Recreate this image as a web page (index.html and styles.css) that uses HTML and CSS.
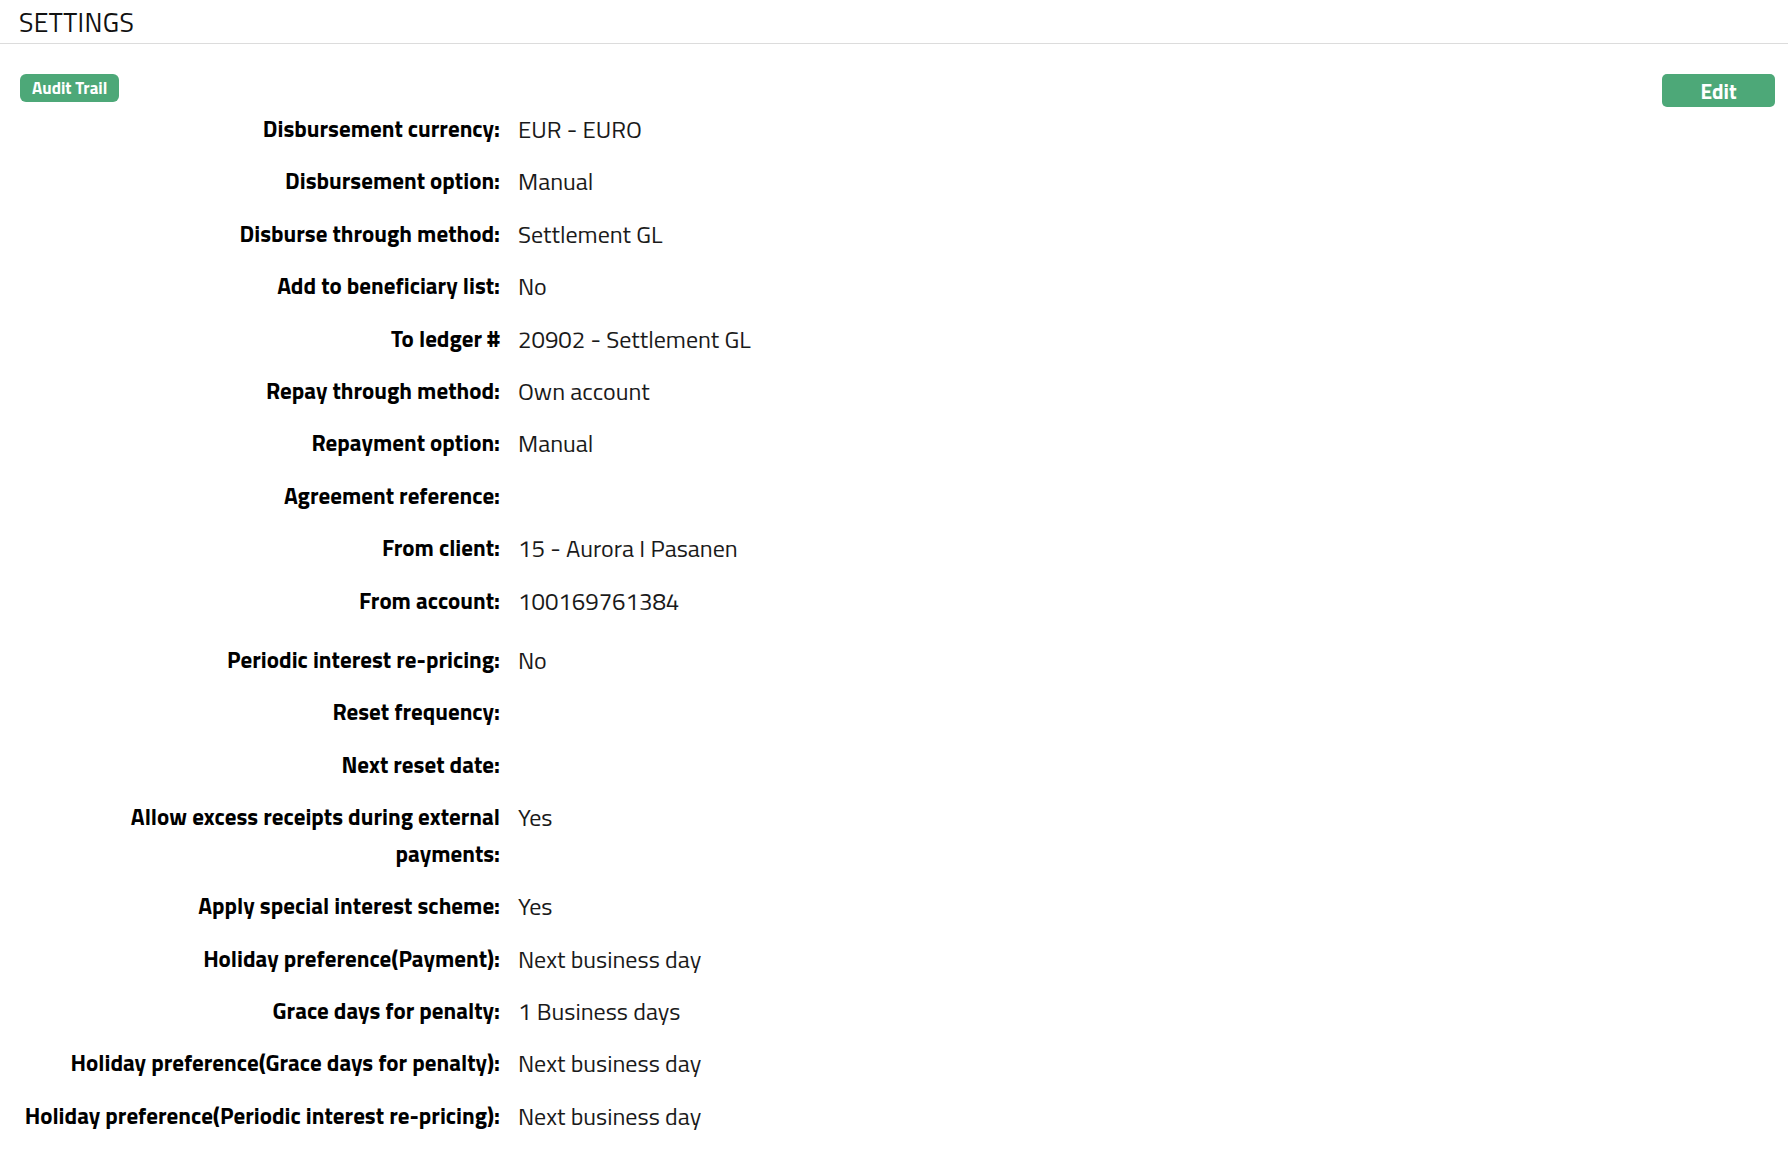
FILE: index.html
```html
<!DOCTYPE html>
<html lang="en">
<head>
  <meta charset="UTF-8">
  <meta name="viewport" content="width=device-width, initial-scale=1.0">
  <title>Settings</title>
  <link rel="stylesheet" href="styles.css">
</head>
<body>
  <div class="page-header">
    <h1 class="page-title">SETTINGS</h1>
  </div>

  <div class="panel">
    <div class="toolbar">
      <button class="btn btn-small">Audit Trail</button>
      <button class="btn btn-edit">Edit</button>
    </div>

    <dl class="details">
      <dt>Disbursement currency:</dt>
      <dd>EUR - EURO</dd>

      <dt>Disbursement option:</dt>
      <dd>Manual</dd>

      <dt>Disburse through method:</dt>
      <dd>Settlement GL</dd>

      <dt>Add to beneficiary list:</dt>
      <dd>No</dd>

      <dt>To ledger #</dt>
      <dd>20902 - Settlement GL</dd>

      <dt>Repay through method:</dt>
      <dd>Own account</dd>

      <dt>Repayment option:</dt>
      <dd>Manual</dd>

      <dt>Agreement reference:</dt>
      <dd></dd>

      <dt>From client:</dt>
      <dd>15 - Aurora I Pasanen</dd>

      <dt>From account:</dt>
      <dd>100169761384</dd>
    </dl>

    <dl class="details details-next">
      <dt>Periodic interest re-pricing:</dt>
      <dd>No</dd>

      <dt>Reset frequency:</dt>
      <dd></dd>

      <dt>Next reset date:</dt>
      <dd></dd>

      <dt>Allow excess receipts during external payments:</dt>
      <dd>Yes</dd>

      <dt>Apply special interest scheme:</dt>
      <dd>Yes</dd>

      <dt>Holiday preference(Payment):</dt>
      <dd>Next business day</dd>

      <dt>Grace days for penalty:</dt>
      <dd>1 Business days</dd>

      <dt>Holiday preference(Grace days for penalty):</dt>
      <dd>Next business day</dd>

      <dt>Holiday preference(Periodic interest re-pricing):</dt>
      <dd>Next business day</dd>
    </dl>
  </div>
</body>
</html>
```
FILE: styles.css
```css
body {
  margin: 0;
  font-family: "Titillium Web", "Roboto Condensed", sans-serif;
  color: #111;
  background: #fff;
}

.page-header {
  border-bottom: 1px solid #dcdcdc;
  padding: 2px 19px 0;
  height: 41px;
  display: flex;
  align-items: center;
}

.page-title {
  margin: 0;
  font-size: 26.5px;
  font-weight: 400;
  line-height: 1;
  letter-spacing: 0.4px;
}

.panel {
  padding: 30px 13px 0 20px;
}

.toolbar {
  display: flex;
  justify-content: space-between;
  align-items: flex-start;
  height: 28px;
}

.btn {
  background: #4da878;
  color: #fff;
  border: none;
  font-family: inherit;
  font-weight: 700;
  cursor: pointer;
}

.btn-small {
  height: 28px;
  padding: 0 12px;
  font-size: 17px;
  line-height: 28px;
  border-radius: 6px;
}

.btn-edit {
  width: 113px;
  height: 33px;
  font-size: 21px;
  line-height: 33px;
  border-radius: 5px;
}

.details {
  display: grid;
  grid-template-columns: 476px 1fr;
  column-gap: 18px;
  margin: 1px 0 0;
  padding-left: 4px;
  font-size: 23px;
  line-height: 36.4px;
}

.details-next {
  margin-top: 7px;
}

.details dt {
  font-weight: 700;
  text-align: right;
  padding: 8px 0;
  color: #000;
}

.details dd {
  margin: 0;
  padding: 8px 0;
  font-size: 24px;
  color: #1a1a1a;
}
```
